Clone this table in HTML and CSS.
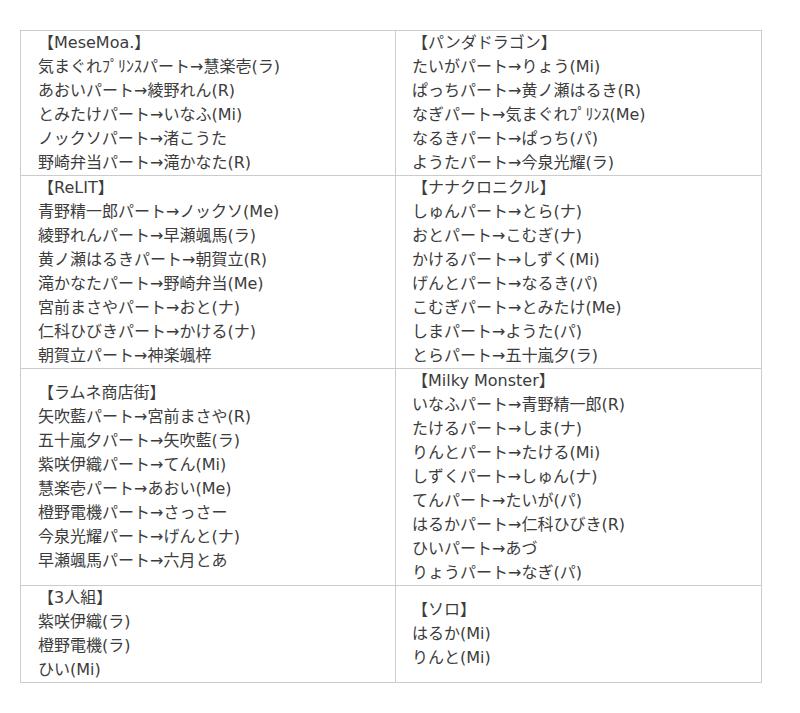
FILE: index.html
```html
<!DOCTYPE html>
<html lang="ja">
<head>
<meta charset="utf-8">
<link rel="stylesheet" href="styles.css">
</head>
<body>
<table class="parts">
<tr>
<td class="col-left">【MeseMoa.】<br>気まぐれﾌﾟﾘﾝｽパート→慧楽壱(ラ)<br>あおいパート→綾野れん(R)<br>とみたけパート→いなふ(Mi)<br>ノックソパート→渚こうた<br>野崎弁当パート→滝かなた(R)</td>
<td class="col-right">【パンダドラゴン】<br>たいがパート→りょう(Mi)<br>ぱっちパート→黄ノ瀬はるき(R)<br>なぎパート→気まぐれﾌﾟﾘﾝｽ(Me)<br>なるきパート→ぱっち(パ)<br>ようたパート→今泉光耀(ラ)</td>
</tr>
<tr>
<td class="col-left">【ReLIT】<br>青野精一郎パート→ノックソ(Me)<br>綾野れんパート→早瀬颯馬(ラ)<br>黄ノ瀬はるきパート→朝賀立(R)<br>滝かなたパート→野崎弁当(Me)<br>宮前まさやパート→おと(ナ)<br>仁科ひびきパート→かける(ナ)<br>朝賀立パート→神楽颯梓</td>
<td class="col-right">【ナナクロニクル】<br>しゅんパート→とら(ナ)<br>おとパート→こむぎ(ナ)<br>かけるパート→しずく(Mi)<br>げんとパート→なるき(パ)<br>こむぎパート→とみたけ(Me)<br>しまパート→ようた(パ)<br>とらパート→五十嵐夕(ラ)</td>
</tr>
<tr>
<td class="col-left">【ラムネ商店街】<br>矢吹藍パート→宮前まさや(R)<br>五十嵐夕パート→矢吹藍(ラ)<br>紫咲伊織パート→てん(Mi)<br>慧楽壱パート→あおい(Me)<br>橙野電機パート→さっさー<br>今泉光耀パート→げんと(ナ)<br>早瀬颯馬パート→六月とあ</td>
<td class="col-right">【Milky Monster】<br>いなふパート→青野精一郎(R)<br>たけるパート→しま(ナ)<br>りんとパート→たける(Mi)<br>しずくパート→しゅん(ナ)<br>てんパート→たいが(パ)<br>はるかパート→仁科ひびき(R)<br>ひいパート→あづ<br>りょうパート→なぎ(パ)</td>
</tr>
<tr>
<td class="col-left">【3人組】<br>紫咲伊織(ラ)<br>橙野電機(ラ)<br>ひい(Mi)</td>
<td class="col-right">【ソロ】<br>はるか(Mi)<br>りんと(Mi)</td>
</tr>
</table>
</body>
</html>
```
FILE: styles.css
```css
html, body {
  margin: 0;
  padding: 0;
  background: #fff;
}
body {
  padding: 30px 38px 0 20px;
  font-family: "DejaVu Sans", "Noto Sans CJK JP", sans-serif;
  font-size: 16px;
  line-height: 24px;
  color: #3c3c3c;
}
.parts {
  border-collapse: collapse;
  width: 742px;
}
.parts td {
  border: 1px solid #cccccc;
  padding: 0 0 0 17px;
  vertical-align: middle;
  white-space: nowrap;
}
.parts .col-left {
  width: 357px;
}
.parts .col-right {
  padding-left: 16px;
}
```
